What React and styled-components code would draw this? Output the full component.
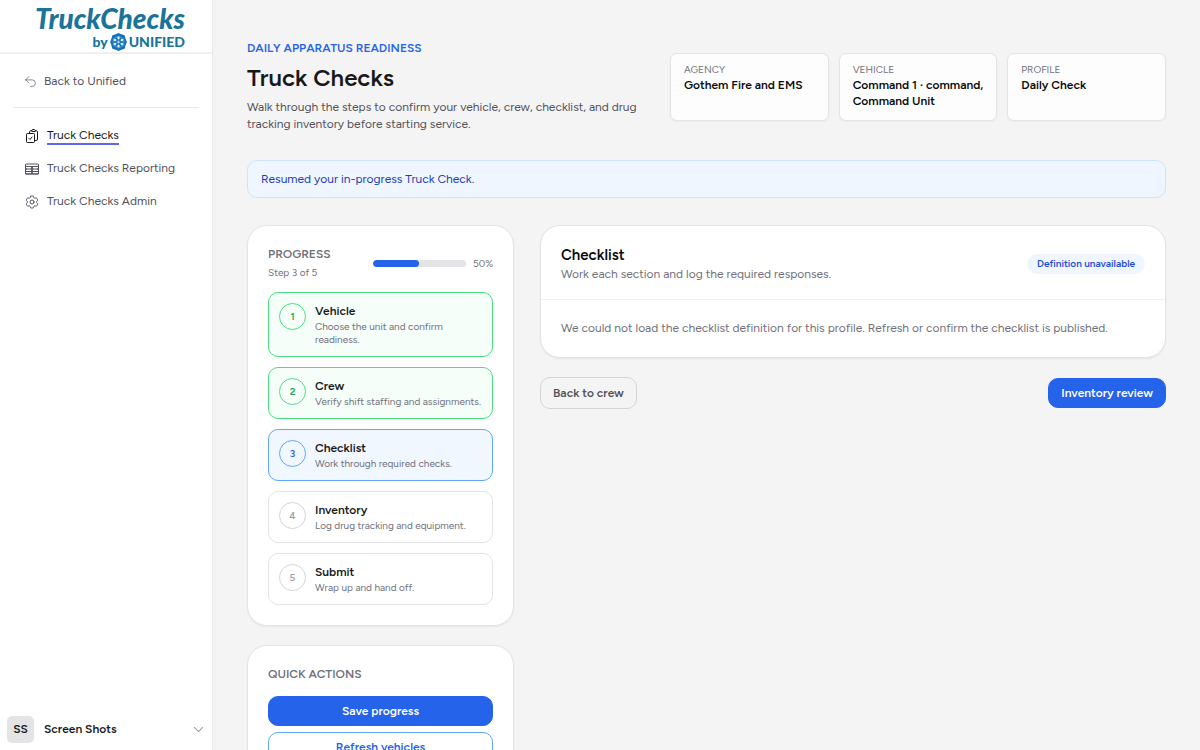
import React from 'react';
import {
  HiOutlineArrowUturnLeft,
  HiOutlineChevronDown,
  HiOutlineClipboardDocumentCheck,
  HiOutlineCog6Tooth,
  HiOutlineTableCells,
} from 'react-icons/hi2';
import styled, { createGlobalStyle } from 'styled-components';

const colors = {
  blue: '#2563eb',
  blueBorder: '#60a5fa',
  blueSoft: '#eff6ff',
  brand: '#1b7399',
  green: '#16a34a',
  greenBorder: '#4ade80',
  ink: '#18181b',
  muted: '#71717b',
  page: '#f4f4f4',
};

const navItems = [
  { label: 'Truck Checks', icon: HiOutlineClipboardDocumentCheck, active: true },
  { label: 'Truck Checks Reporting', icon: HiOutlineTableCells },
  { label: 'Truck Checks Admin', icon: HiOutlineCog6Tooth },
];

const summaryItems = [
  { label: 'Agency', value: 'Gothem Fire and EMS' },
  { label: 'Vehicle', value: 'Command 1 · command, Command Unit' },
  { label: 'Profile', value: 'Daily Check' },
];

const steps = [
  { title: 'Vehicle', text: 'Choose the unit and confirm readiness.', status: 'done' },
  { title: 'Crew', text: 'Verify shift staffing and assignments.', status: 'done' },
  { title: 'Checklist', text: 'Work through required checks.', status: 'current' },
  { title: 'Inventory', text: 'Log drug tracking and equipment.', status: 'todo' },
  { title: 'Submit', text: 'Wrap up and hand off.', status: 'todo' },
];

const stepStyles = {
  done: { border: colors.greenBorder, background: '#f5fef8', color: colors.green },
  current: { border: colors.blueBorder, background: '#f1f7ff', color: colors.blue },
  todo: { border: '#e4e4e7', background: '#fff', color: '#9f9fa9' },
};

const spokes = [0, 60, 120, 180, 240, 300];

const UnifiedMark = () => (
  <svg width="19" height="20" viewBox="0 0 20 20" aria-hidden="true">
    <path d="M10 0.500l3 1.300 3.400 1 1 3.600 1.400 3.600-1.400 3.600-1 3.600-3.400 1-3 1.300-3-1.300-3.400-1-1-3.600L1.200 10l1.400-3.600 1-3.600 3.400-1z" fill="#1173bd" />
    {spokes.map((angle) => (
      <g key={angle} transform={`rotate(${angle} 10 10)`}>
        <path d="M10 10V3.600M10 3.600l5.500 3.200" stroke="#8cc3e8" strokeWidth="0.500" fill="none" />
        <circle cx="10" cy="5.800" r="1.300" fill="#e8f5fd" />
      </g>
    ))}
    <circle cx="10" cy="10" r="0.900" fill="#e8f5fd" />
  </svg>
);

const Sidebar = () => (
  <SidebarWrapper>
    <Brand>
      <BrandName>TruckChecks</BrandName>
      <BrandByline>
        by
        <UnifiedMark />
        UNIFIED
      </BrandByline>
    </Brand>
    <BackRow>
      <BackLink href="#unified">
        <HiOutlineArrowUturnLeft size={13} />
        Back to Unified
      </BackLink>
    </BackRow>
    <Nav aria-label="Main">
      {navItems.map(({ label, icon: Icon, active }) => (
        <NavLink key={label} href="#truck-checks" $active={active} aria-current={active ? 'page' : undefined}>
          <Icon size={16} />
          <NavLabel $active={active}>{label}</NavLabel>
        </NavLink>
      ))}
    </Nav>
    <UserButton type="button">
      <Avatar>SS</Avatar>
      <UserName>Screen Shots</UserName>
      <HiOutlineChevronDown size={13} strokeWidth={2} />
    </UserButton>
  </SidebarWrapper>
);

const ProgressPanel = () => (
  <Panel>
    <ProgressHeader>
      <div>
        <PanelLabel>Progress</PanelLabel>
        <StepCount>Step 3 of 5</StepCount>
      </div>
      <ProgressMeter>
        <Track role="progressbar" aria-label="Progress" aria-valuenow={50}>
          <Fill style={{ width: '50%' }} />
        </Track>
        50%
      </ProgressMeter>
    </ProgressHeader>
    <StepList>
      {steps.map((step, index) => (
        <li key={step.title}>
          <StepButton type="button" $status={step.status}>
            <StepNumber $status={step.status}>{index + 1}</StepNumber>
            <span>
              <StepTitle>{step.title}</StepTitle>
              <StepText>{step.text}</StepText>
            </span>
          </StepButton>
        </li>
      ))}
    </StepList>
  </Panel>
);

const App = () => (
  <>
    <GlobalStyle />
    <Shell>
      <Sidebar />
      <Main>
        <PageHeader>
          <Intro>
            <Eyebrow>Daily apparatus readiness</Eyebrow>
            <Title>Truck Checks</Title>
            <Description>
              Walk through the steps to confirm your vehicle, crew, checklist, and drug tracking inventory before starting service.
            </Description>
          </Intro>
          <Summary>
            {summaryItems.map(({ label, value }) => (
              <SummaryCard key={label}>
                <SummaryLabel>{label}</SummaryLabel>
                <SummaryValue>{value}</SummaryValue>
              </SummaryCard>
            ))}
          </Summary>
        </PageHeader>
        <Notice role="status">Resumed your in-progress Truck Check.</Notice>
        <Columns>
          <Stack>
            <ProgressPanel />
            <Panel>
              <PanelLabel>Quick actions</PanelLabel>
              <ActionList>
                <Button type="button" $variant="primary">Save progress</Button>
                <Button type="button" $variant="outline">Refresh vehicles</Button>
              </ActionList>
            </Panel>
          </Stack>
          <Stack>
            <ChecklistPanel>
              <ChecklistHeader>
                <div>
                  <ChecklistTitle>Checklist</ChecklistTitle>
                  <ChecklistText>Work each section and log the required responses.</ChecklistText>
                </div>
                <Badge>Definition unavailable</Badge>
              </ChecklistHeader>
              <ChecklistBody>
                We could not load the checklist definition for this profile. Refresh or confirm the checklist is published.
              </ChecklistBody>
            </ChecklistPanel>
            <Footer>
              <Button type="button" $variant="neutral">Back to crew</Button>
              <Button type="button" $variant="primary">Inventory review</Button>
            </Footer>
          </Stack>
        </Columns>
      </Main>
    </Shell>
  </>
);

const GlobalStyle = createGlobalStyle`
  *, *::before, *::after {
    box-sizing: border-box;
  }

  body {
    background: ${colors.page};
    color: ${colors.ink};
    font-family: Figtree, Lato, "Liberation Sans", sans-serif;
    font-size: 12px;
    line-height: 17px;
    margin: 0;
  }

  h1, h2, p, dl, dt, dd, ol {
    margin: 0;
    padding: 0;
  }

  button {
    cursor: pointer;
    font: inherit;
  }

  svg {
    flex-shrink: 0;
  }
`;

const Shell = styled.div`
  display: grid;
  grid-template-columns: 213px minmax(0, 1fr);
  height: 100vh;
`;

const SidebarWrapper = styled.aside`
  background: #fff;
  border-right: 1px solid #e8e8ea;
  display: flex;
  flex-direction: column;
`;

const Brand = styled.div`
  align-items: flex-end;
  border-bottom: 2px solid #f0f0f1;
  color: ${colors.brand};
  display: flex;
  flex-direction: column;
  font-family: Lato, "Open Sans", sans-serif;
  height: 54px;
  padding: 4px 27px 0 0;
`;

const BrandName = styled.div`
  font-size: 28px;
  font-style: italic;
  font-weight: 900;
  line-height: 28px;
`;

const BrandByline = styled.div`
  align-items: center;
  display: flex;
  font-size: 14px;
  font-weight: 900;
  gap: 1px;
  line-height: 20px;
`;

const BackRow = styled.div`
  border-bottom: 1px solid #e8e8ea;
  margin: 0 13px 0 14px;
  padding: 18px 10px 17px;
`;

const BackLink = styled.a`
  align-items: center;
  color: #52525c;
  display: flex;
  gap: 7px;
  line-height: 18px;
  text-decoration: none;

  svg {
    color: ${colors.muted};
  }
`;

const Nav = styled.nav`
  display: flex;
  flex: 1;
  flex-direction: column;
  gap: 16px;
  padding: 20px 24px;
`;

const NavLink = styled.a`
  align-items: flex-start;
  color: ${({ $active }) => ($active ? colors.ink : '#52525c')};
  display: flex;
  gap: 7px;
  text-decoration: none;
`;

const NavLabel = styled.span`
  border-bottom: 2px solid ${({ $active }) => ($active ? '#6366f1' : 'transparent')};
  line-height: 15px;
`;

const UserButton = styled.button`
  align-items: center;
  background: none;
  border: 0;
  color: #9f9fa9;
  display: flex;
  gap: 10px;
  padding: 7px;
  text-align: left;
`;

const Avatar = styled.span`
  background: #e4e4e7;
  border-radius: 5px;
  color: ${colors.ink};
  font-weight: 600;
  line-height: 27px;
  text-align: center;
  width: 27px;
`;

const UserName = styled.span`
  color: ${colors.ink};
  flex: 1;
  font-weight: 600;
`;

const Main = styled.main`
  overflow-y: auto;
  padding: 40px 34px;
  scrollbar-width: none;
`;

const PageHeader = styled.header`
  align-items: center;
  display: flex;
  justify-content: space-between;
`;

const Intro = styled.div`
  max-width: 400px;
`;

const Eyebrow = styled.p`
  color: ${colors.blue};
  font-weight: 600;
  line-height: 16px;
  text-transform: uppercase;
`;

const Title = styled.h1`
  font-size: 24px;
  font-weight: 600;
  line-height: 30px;
  margin: 7px 0 6px;
`;

const Description = styled.p`
  color: #52525c;
`;

const Summary = styled.dl`
  display: grid;
  gap: 10px;
  grid-template-columns: repeat(3, 1fr);
  width: 496px;
`;

const SummaryCard = styled.div`
  background: #fdfdfd;
  border: 1px solid #e4e4e7;
  border-radius: 7px;
  box-shadow: 0 1px 2px rgba(0, 0, 0, 0.04);
  min-height: 68px;
  padding: 9px 13px;
`;

const SummaryLabel = styled.dt`
  color: ${colors.muted};
  font-size: 10px;
  line-height: 14px;
  text-transform: uppercase;
`;

const SummaryValue = styled.dd`
  color: #09090b;
  font-weight: 600;
  line-height: 16px;
`;

const Notice = styled.div`
  background: ${colors.blueSoft};
  border: 1px solid #cfe3fc;
  border-radius: 10px;
  color: #1d40b0;
  line-height: 16px;
  margin: 27px 0;
  padding: 10px 13px;
`;

const Columns = styled.div`
  align-items: start;
  display: grid;
  gap: 26px;
  grid-template-columns: 267px minmax(0, 1fr);
`;

const Stack = styled.div`
  display: flex;
  flex-direction: column;
  gap: 19px;
`;

const Panel = styled.section`
  background: #fff;
  border: 1px solid #e4e4e7;
  border-radius: 20px;
  box-shadow: 0 1px 2px rgba(0, 0, 0, 0.06);
  padding: 20px;
`;

const PanelLabel = styled.h2`
  color: ${colors.muted};
  font-size: 12px;
  font-weight: 600;
  line-height: 17px;
  text-transform: uppercase;
`;

const ProgressHeader = styled.div`
  align-items: center;
  display: flex;
  justify-content: space-between;
  margin-bottom: 12px;
`;

const StepCount = styled.p`
  color: ${colors.muted};
  font-size: 10px;
  line-height: 14px;
  margin-top: 3px;
`;

const ProgressMeter = styled.div`
  align-items: center;
  color: ${colors.muted};
  display: flex;
  font-size: 10px;
  gap: 7px;
`;

const Track = styled.div`
  background: #e4e4e7;
  border-radius: 4px;
  height: 7px;
  overflow: hidden;
  width: 93px;
`;

const Fill = styled.div`
  background: ${colors.blue};
  border-radius: 4px;
  height: 100%;
`;

const StepList = styled.ol`
  display: flex;
  flex-direction: column;
  gap: 10px;
  list-style: none;
`;

const StepButton = styled.button`
  align-items: flex-start;
  background: ${({ $status }) => stepStyles[$status].background};
  border: 1px solid ${({ $status }) => stepStyles[$status].border};
  border-radius: 10px;
  color: ${colors.ink};
  display: flex;
  gap: 9px;
  padding: 10px;
  text-align: left;
  width: 100%;
`;

const StepNumber = styled.span`
  border: 1px solid ${({ $status }) => ($status === 'todo' ? '#d4d4d8' : stepStyles[$status].border)};
  border-radius: 50%;
  color: ${({ $status }) => stepStyles[$status].color};
  flex-shrink: 0;
  font-size: 10px;
  font-weight: 600;
  line-height: 25px;
  text-align: center;
  width: 27px;
`;

const StepTitle = styled.span`
  display: block;
  font-weight: 600;
`;

const StepText = styled.span`
  color: ${colors.muted};
  display: block;
  font-size: 10px;
  line-height: 13px;
`;

const ActionList = styled.div`
  display: flex;
  flex-direction: column;
  gap: 6px;
  margin-top: 13px;
`;

const buttonStyles = {
  primary: { background: colors.blue, border: colors.blue, color: '#fff' },
  outline: { background: '#fff', border: colors.blueBorder, color: colors.blue },
  neutral: { background: 'transparent', border: '#d4d4d8', color: '#52525c' },
};

const Button = styled.button`
  background: ${({ $variant }) => buttonStyles[$variant].background};
  border: 1px solid ${({ $variant }) => buttonStyles[$variant].border};
  border-radius: 10px;
  color: ${({ $variant }) => buttonStyles[$variant].color};
  font-weight: 600;
  line-height: 16px;
  padding: ${({ $variant }) => ($variant === 'neutral' ? '7px' : '6px')} 12px;
`;

const ChecklistPanel = styled(Panel)`
  padding: 0;
`;

const ChecklistHeader = styled.div`
  align-items: center;
  border-bottom: 1px solid #f0f0f2;
  display: flex;
  justify-content: space-between;
  padding: 18px 20px 16px;
`;

const ChecklistTitle = styled.h2`
  color: #09090b;
  font-size: 15px;
  font-weight: 600;
  line-height: 22px;
`;

const ChecklistText = styled.p`
  color: ${colors.muted};
`;

const Badge = styled.span`
  background: ${colors.blueSoft};
  border-radius: 10px;
  color: #1d4ed8;
  font-size: 10px;
  font-weight: 600;
  line-height: 14px;
  padding: 3px 10px;
`;

const ChecklistBody = styled.p`
  color: ${colors.muted};
  padding: 20px;
`;

const Footer = styled.div`
  align-items: center;
  display: flex;
  justify-content: space-between;
`;

export default App;
